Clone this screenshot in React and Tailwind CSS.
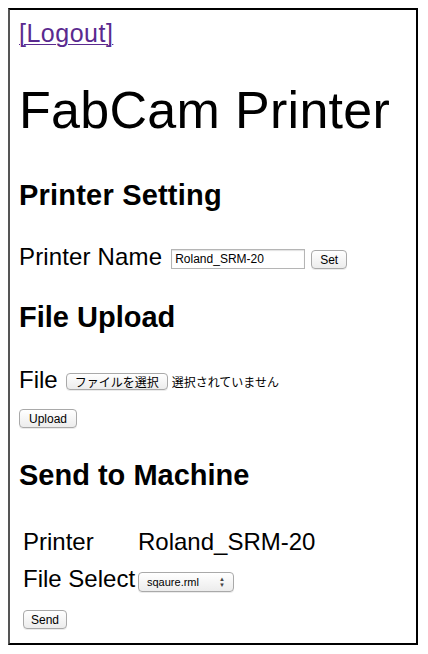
import React from 'react';

const btnBase = 'rounded-[4px] border border-[#a9a9a9] bg-gradient-to-b from-white to-[#ececec] text-[11px] leading-none text-black shadow-[0_1px_0_rgba(0,0,0,0.08)] flex items-center';
const btn = `${btnBase} justify-center`;

export default function App() {
  return <div className="min-h-[654px] bg-white" style={{ fontFamily: '"Liberation Sans", "Noto Sans CJK JP", sans-serif' }}>
      <div className="absolute left-[8px] top-[8px] w-[410px] h-[637px] border-2 border-black border-l-[#555] pl-[9px] text-black">
        <div className="mt-[8px] h-[30px] text-[25px] leading-[30px] tracking-[0.5px]">
          <a href="#" className="text-[#5a2a8f] underline decoration-1 underline-offset-2">[Logout]</a>
        </div>

        <h1 className="mt-[32px] h-[60px] text-[52px] leading-[60px] font-normal tracking-[0.3px]">FabCam Printer</h1>

        <h2 className="mt-[38px] h-[34px] text-[29px] leading-[34px] font-bold tracking-[0.2px]">Printer Setting</h2>

        <div className="mt-[30px] h-[30px] flex items-start">
          <span className="text-[24px] leading-[30px] tracking-[0.15px]">Printer Name</span>
          <div className="ml-[9px] mt-[7px] w-[134px] h-[20px] border border-[#b5b5b5] shadow-[inset_0_1px_1px_rgba(0,0,0,0.12)] text-[12px] leading-[18px] px-[3px]">Roland_SRM-20</div>
          <div className={`${btn} ml-[6px] mt-[8px] w-[36px] h-[19px] text-[12px]`}>Set</div>
        </div>

        <h2 className="mt-[28px] h-[34px] text-[29px] leading-[34px] font-bold">File Upload</h2>

        <div className="mt-[31px] h-[30px] flex items-start">
          <span className="text-[24px] leading-[30px]">File</span>
          <div className={`${btn} ml-[8px] mt-[8px] w-[102px] h-[17px] text-[12px]`} style={{ fontFamily: '"Noto Sans CJK JP", sans-serif' }}>ファイルを選択</div>
          <span className="ml-[4px] mt-[8px] text-[12px] leading-[17px]" style={{ fontFamily: '"Noto Sans CJK JP", sans-serif' }}>選択されていません</span>
        </div>

        <div className={`${btn} mt-[14px] w-[58px] h-[19px] text-[12px]`}>Upload</div>

        <h2 className="mt-[30px] h-[34px] text-[29px] leading-[34px] font-bold">Send to Machine</h2>

        <div className="mt-[35px] pl-[4px] grid grid-cols-[115px_auto] gap-y-[7px] text-[24px] leading-[30px]">
          <span>Printer</span>
          <span>Roland_SRM-20</span>
          <span className="whitespace-nowrap">File Select</span>
          <div className="flex items-start">
            <div className={`${btnBase} justify-between mt-[8px] w-[96px] h-[20px] pl-[8px] pr-[8px]`}>
              <span className="text-[11px]">sqaure.rml</span>
              <span className="text-[6px] leading-[6px] flex flex-col items-center text-[#444]"><span>▲</span><span>▼</span></span>
            </div>
          </div>
        </div>

        <div className={`${btn} mt-[16px] ml-[4px] w-[44px] h-[19px] text-[12px]`}>Send</div>
      </div>
    </div>;
}
